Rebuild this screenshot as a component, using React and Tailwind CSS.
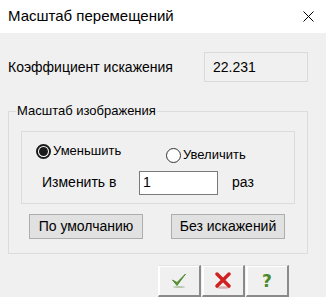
import React from 'react'

const font = { fontFamily: '"Liberation Sans", Arial, sans-serif' }

function Radio({ checked, label, className = '' }) {
  return (
    <label className={`flex items-center gap-[2px] ${className}`}>
      <span
        className={`flex items-center justify-center w-[15px] h-[15px] rounded-full bg-white ${
          checked ? 'border-2 border-[#1a1a1a]' : 'border border-[#333333]'
        }`}
      >
        {checked && <span className="w-[9px] h-[9px] rounded-full bg-[#1a1a1a]" />}
      </span>
      <span className="text-[13px] text-black">{label}</span>
    </label>
  )
}

function ToolButton({ children }) {
  return (
    <button className="w-[43px] h-[32px] flex items-start justify-center pt-[6px] bg-[#f0f0f0] border-t border-l border-t-[#e3e3e3] border-l-white border-r-2 border-b-2 border-r-[#8a8a8a] border-b-[#8a8a8a] shadow-[inset_1px_1px_0_#ffffff]">
      {children}
    </button>
  )
}

export default function App() {
  return (
    <div className="w-[326px] h-[297px] bg-[#f0f0f0] overflow-hidden flex flex-col" style={font}>
      <div className="h-[34px] bg-white flex items-center justify-between pl-[8px] pr-[12px]">
        <span className="text-[15px] text-black">Масштаб перемещений</span>
        <svg width="11" height="11" viewBox="0 0 11 11">
          <path d="M0.5 0.5 L10.5 10.5 M10.5 0.5 L0.5 10.5" stroke="#000" strokeWidth="1" />
        </svg>
      </div>

      <div className="flex items-center mt-[19px] pl-[8px]">
        <span className="w-[196px] text-[14px] text-black">Коэффициент искажения</span>
        <div className="w-[104px] h-[30px] border border-[#dadada] flex items-center pl-[8px] text-[14px] text-black">
          22.231
        </div>
      </div>

      <fieldset className="ml-[8px] mt-[21px] w-[300px] h-[153px] border border-[#dcdcdc]">
        <legend className="ml-[7px] px-[1px] text-[13px] leading-[16px] text-black">Масштаб изображения</legend>

        <div className="mt-[12px] mx-[12px] h-[73px] border border-[#dcdcdc] pl-[14px]">
          <div className="flex items-start mt-[9px]">
            <Radio checked label="Уменьшить" className="w-[130px]" />
            <Radio label="Увеличить" className="mt-[4px]" />
          </div>
          <div className="flex items-center mt-[6px] pl-[6px]">
            <span className="w-[97px] text-[14px] text-black">Изменить в</span>
            <div className="w-[79px] h-[24px] bg-white border border-[#7a7a7a] flex items-center pl-[3px] text-[14px] text-black">
              1
            </div>
            <span className="ml-[14px] text-[14px] text-black">раз</span>
          </div>
        </div>

        <div className="flex gap-[28px] mt-[10px] pl-[20px]">
          <button className="w-[114px] h-[25px] bg-[#e1e1e1] border border-[#adadad] text-[14px] text-black">
            По умолчанию
          </button>
          <button className="w-[114px] h-[25px] bg-[#e1e1e1] border border-[#adadad] text-[14px] text-black">
            Без искажений
          </button>
        </div>
      </fieldset>

      <div className="flex mt-[11px] ml-[158px] gap-[1px]">
        <ToolButton>
          <svg width="16" height="16" viewBox="0 0 16 16">
            <ellipse cx="8" cy="15" rx="6" ry="1" fill="#b8c8b0" />
            <path d="M1.5 8 L6 13.5 L14.5 2 L6 10.5 Z" fill="#5a9a30" stroke="#3f7a20" strokeWidth="0.8" strokeLinejoin="round" />
          </svg>
        </ToolButton>
        <ToolButton>
          <svg width="18" height="17" viewBox="0 0 18 17">
            <ellipse cx="9" cy="15.5" rx="7" ry="1.3" fill="#d8b0b0" />
            <path d="M3 2 L15 14 M15 2 L3 14" stroke="#d02020" strokeWidth="3.4" strokeLinecap="round" />
          </svg>
        </ToolButton>
        <ToolButton>
          <span className="text-[17px] leading-[18px] font-bold text-[#4a8a2a]" style={{ fontFamily: '"DejaVu Sans", sans-serif' }}>?</span>
        </ToolButton>
      </div>
    </div>
  )
}
